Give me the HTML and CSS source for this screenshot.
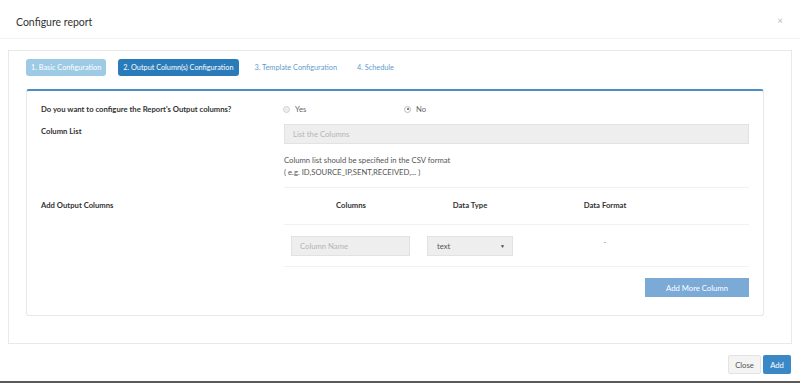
FILE: index.html
```html
<!DOCTYPE html>
<html>
<head>
<meta charset="utf-8">
<link rel="stylesheet" href="styles.css">
</head>
<body>
<div class="modal">
  <div class="modal-header">
    <span class="title">Configure report</span>
    <span class="close-x">×</span>
  </div>
  <div class="modal-body">
    <div class="panel">
      <div class="tabs">
        <span class="tab tab-done">1. Basic Configuration</span>
        <span class="tab tab-active">2. Output Column(s) Configuration</span>
        <span class="tab tab-link">3. Template Configuration</span>
        <span class="tab tab-link tab-last">4. Schedule</span>
      </div>
      <div class="card">
        <div class="form-row row-q">
          <div class="label">Do you want to configure the Report's Output columns?</div>
          <div class="field radios">
            <label class="radio"><span class="dot"></span>Yes</label>
            <label class="radio radio-no"><span class="dot checked"></span>No</label>
          </div>
        </div>
        <div class="form-row row-list">
          <div class="label label-pad">Column List</div>
          <div class="field">
            <div class="input input-wide">List the Columns</div>
            <div class="help">
              <div>Column list should be specified in the CSV format</div>
              <div>( e.g. ID,SOURCE_IP,SENT,RECEIVED,... )</div>
            </div>
          </div>
        </div>
        <div class="form-row row-table">
          <div class="label label-head">Add Output Columns</div>
          <div class="field">
            <div class="trow thead">
              <div class="c1">Columns</div>
              <div class="c2">Data Type</div>
              <div class="c3">Data Format</div>
              <div class="c4"></div>
            </div>
            <div class="trow tbody">
              <div class="c1"><div class="input input-col">Column Name</div></div>
              <div class="c2"><div class="select"><span>text</span><span class="caret">▼</span></div></div>
              <div class="c3 dash">-</div>
              <div class="c4"></div>
            </div>
            <div class="btn-row">
              <span class="btn-more">Add More Column</span>
            </div>
          </div>
        </div>
      </div>
    </div>
  </div>
  <div class="modal-footer">
    <span class="btn btn-close">Close</span>
    <span class="btn btn-add">Add</span>
  </div>
</div>
</body>
</html>
```

FILE: styles.css
```css
* { box-sizing: border-box; }
html, body { margin: 0; padding: 0; background: #fff; }
body { font-family: Lato, "Open Sans", sans-serif; color: #333; }

.modal {
  width: 800px;
  height: 383px;
  display: flex;
  flex-direction: column;
  border-bottom: 2px solid #5a5a5a;
}

.modal-header {
  height: 39px;
  border-bottom: 1px solid #f3f3f3;
  display: flex;
  align-items: center;
  justify-content: space-between;
  padding: 0 17px 0 16px;
}
.title { font-size: 10.5px; color: #333; margin-top: 5px; }
.close-x { font-size: 10px; color: #bbb; margin-top: 2px; }

.modal-body { padding: 11px 8px 0 8px; }

.panel {
  width: 784px;
  height: 294px;
  border: 1px solid #e9e9e9;
  padding: 8px 27px 0 17px;
}

.tabs { display: flex; align-items: center; height: 17px; }
.tab {
  font-size: 7.3px;
  height: 17px;
  line-height: 17px;
  padding: 0 5px;
  border-radius: 3px;
  white-space: nowrap;
}
.tab-done { background: #9dcbe6; color: #fff; }
.tab-active { background: #2a7bb9; color: #fff; margin-left: 12px; }
.tab-link { color: #5f9ccf; margin-left: 11px; }
.tab-last { margin-left: 10px; }

.card {
  margin-top: 13px;
  border: 1px solid #e8e8e8;
  border-top: 2px solid #4c8dc6;
  border-radius: 3px;
  height: 227px;
  padding: 11px 14px 0 14px;
}

.form-row { display: flex; }
.label {
  width: 243px;
  font-size: 7.7px;
  font-weight: bold;
  color: #333;
}
.field { flex: 1; font-size: 7.7px; }

.row-q { height: 14px; align-items: center; }
.radios { display: flex; align-items: center; color: #666; }
.radio { display: flex; align-items: center; width: 121px; margin-left: -1px; }
.radio-no { width: auto; margin-left: 0; }
.dot {
  width: 7px; height: 7px;
  border-radius: 50%;
  border: 1px solid #d0d0d0;
  background: #eee;
  margin-right: 5px;
  position: relative;
}
.dot.checked { background: #fff; border-color: #bbb; }
.dot.checked::after {
  content: "";
  position: absolute;
  left: 1.5px; top: 1.5px;
  width: 2px; height: 2px;
  border-radius: 50%;
  background: #555;
}

.row-list { margin-top: 8px; }
.label-pad { padding-top: 2px; }
.input {
  background: #eee;
  border: 1px solid #e2e2e2;
  color: #b5b5b5;
  font-size: 7.7px;
  display: flex;
  align-items: center;
  padding-left: 8px;
}
.input-wide { height: 20px; }
.help {
  margin-top: 10px;
  line-height: 12px;
  color: #555;
  padding-bottom: 9px;
  border-bottom: 1px solid #f1f1f1;
}

.label-head { padding-top: 12px; }
.trow { display: flex; border-bottom: 1px solid #f1f1f1; }
.thead { height: 37px; align-items: center; font-weight: bold; color: #333; padding-bottom: 2px; }
.tbody { height: 42px; align-items: center; }
.c1 { width: 134px; text-align: center; }
.c2 { width: 104px; text-align: center; }
.c3 { width: 166px; text-align: center; }
.c4 { flex: 1; }
.input-col { height: 20px; margin: 0 8px 0 7px; text-align: left; }
.select {
  height: 20px;
  margin: 0 9px;
  background: #eee;
  border: 1px solid #e2e2e2;
  display: flex;
  align-items: center;
  justify-content: space-between;
  padding: 0 7px 0 9px;
  color: #555;
}
.caret { font-size: 5px; color: #444; }
.dash { color: #888; margin-top: -8px; }

.btn-row { display: flex; justify-content: flex-end; margin-top: 11px; }
.btn-more {
  background: #7aaad5;
  color: #fff;
  font-size: 7.7px;
  width: 104px;
  height: 19px;
  display: flex;
  align-items: center;
  justify-content: center;
}

.modal-footer {
  display: flex;
  justify-content: flex-end;
  padding: 11px 9px 0 0;
}
.btn {
  height: 19px;
  display: flex;
  align-items: center;
  justify-content: center;
  font-size: 7.7px;
  border-radius: 2px;
}
.btn-close { width: 33px; background: #f4f4f4; border: 1px solid #e3e3e3; color: #555; margin-right: 2px; }
.btn-add { width: 28px; background: #3a88c5; color: #fff; }
```
